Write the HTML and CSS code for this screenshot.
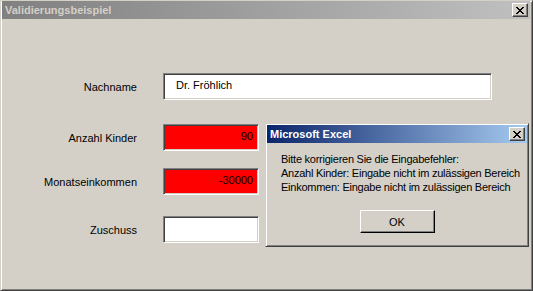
FILE: index.html
```html
<!DOCTYPE html>
<html>
<head>
  <title>Validierungsbeispiel</title>
  <link rel="stylesheet" href="styles.css">
</head>
<body>
  <div class="window">
    <div class="titlebar inactive">
      <span class="title">Validierungsbeispiel</span>
      <span class="close-btn">
        <svg width="8" height="7" viewBox="0 0 8 7"><path d="M0 0h2v1h-2zM6 0h2v1h-2zM1 1h2v1h-2zM5 1h2v1h-2zM2 2h4v1h-4zM3 3h2v1h-2zM2 4h4v1h-4zM1 5h2v1h-2zM5 5h2v1h-2zM0 6h2v1h-2zM6 6h2v1h-2z" fill="#000"/></svg>
      </span>
    </div>

    <div class="form">
      <div class="row row-name">
        <label class="label">Nachname</label>
        <div class="field field-wide">Dr. Fröhlich</div>
      </div>
      <div class="row row-kinder">
        <label class="label">Anzahl Kinder</label>
        <div class="field field-num error">90</div>
      </div>
      <div class="row row-income">
        <label class="label">Monatseinkommen</label>
        <div class="field field-num error">-30000</div>
      </div>
      <div class="row row-zuschuss">
        <label class="label">Zuschuss</label>
        <div class="field field-num"></div>
      </div>
    </div>

    <!-- message box over the form -->
    <div class="msgbox">
      <div class="titlebar active">
        <span class="title">Microsoft Excel</span>
        <span class="close-btn">
          <svg width="8" height="7" viewBox="0 0 8 7"><path d="M0 0h2v1h-2zM6 0h2v1h-2zM1 1h2v1h-2zM5 1h2v1h-2zM2 2h4v1h-4zM3 3h2v1h-2zM2 4h4v1h-4zM1 5h2v1h-2zM5 5h2v1h-2zM0 6h2v1h-2zM6 6h2v1h-2z" fill="#000"/></svg>
        </span>
      </div>
      <div class="msg-text">
        Bitte korrigieren Sie die Eingabefehler:<br>
        Anzahl Kinder: Eingabe nicht im zulässigen Bereich<br>
        Einkommen: Eingabe nicht im zulässigen Bereich
      </div>
      <div class="msg-buttons">
        <button class="ok-button">OK</button>
      </div>
    </div>
  </div>
</body>
</html>
```

FILE: styles.css
```css
body {
  margin: 0;
  background-color: #d4d0c8;
  font-family: "Liberation Sans", Arial, sans-serif;
  font-size: 11px;
  color: #000;
}
.window {
  position: relative;
  width: 533px;
  height: 291px;
  box-sizing: border-box;
  background-color: #d4d0c8;
  border-top: 1px solid #d4d0c8;
  border-left: 1px solid #d4d0c8;
  border-right: 1px solid #404040;
  border-bottom: 1px solid #404040;
  box-shadow: inset 1px 1px 0 #fff, inset -1px -1px 0 #808080;
  padding: 0 2px 2px 1px;
  overflow: hidden;
}
.titlebar {
  display: flex;
  align-items: center;
  justify-content: space-between;
  height: 18px;
  padding: 0 2px 0 3px;
}
.titlebar.inactive {
  background: linear-gradient(to right, #808080, #c0c0c0);
  color: #d4d0c8;
}
.titlebar.active {
  background: linear-gradient(to right, #0a246a, #a6caf0);
  color: #fff;
}
.title {
  font-weight: bold;
  font-size: 11px;
}
.close-btn {
  display: flex;
  align-items: center;
  justify-content: center;
  width: 16px;
  height: 14px;
  box-sizing: border-box;
  background-color: #d4d0c8;
  border-top: 1px solid #fff;
  border-left: 1px solid #fff;
  border-right: 1px solid #404040;
  border-bottom: 1px solid #404040;
  box-shadow: inset -1px -1px 0 #808080;
}
.form {
  padding-top: 54px;
}
.row {
  display: flex;
  align-items: center;
}
.row-kinder { margin-top: 24px; }
.row-income { margin-top: 17px; }
.row-zuschuss { margin-top: 21px; }
.label {
  width: 135px;
  text-align: right;
  margin-right: 26px;
}
.field {
  height: 27px;
  box-sizing: border-box;
  background-color: #fff;
  border-top: 1px solid #808080;
  border-left: 1px solid #808080;
  border-right: 1px solid #fff;
  border-bottom: 1px solid #fff;
  box-shadow: inset 1px 1px 0 #404040, inset -1px -1px 0 #d4d0c8;
  padding: 4px 5px 0 12px;
  line-height: 14px;
}
.field-wide {
  width: 329px;
}
.field-num {
  width: 96px;
  text-align: right;
}
.error {
  background-color: #ff0000;
}
.msgbox {
  position: absolute;
  left: 264px;
  top: 122px;
  width: 264px;
  height: 124px;
  box-sizing: border-box;
  background-color: #d4d0c8;
  border-top: 1px solid #d4d0c8;
  border-left: 1px solid #d4d0c8;
  border-right: 1px solid #404040;
  border-bottom: 1px solid #404040;
  box-shadow: inset 1px 1px 0 #fff, inset -1px -1px 0 #808080;
  padding: 1px;
}
.msg-text {
  padding: 9px 0 0 14px;
  line-height: 14px;
  white-space: nowrap;
  letter-spacing: -0.25px;
}
.msg-buttons {
  display: flex;
  justify-content: center;
  margin-top: 16px;
}
.ok-button {
  width: 75px;
  height: 23px;
  font-family: "Liberation Sans", Arial, sans-serif;
  font-size: 11px;
  background-color: #d4d0c8;
  border-top: 1px solid #fff;
  border-left: 1px solid #fff;
  border-right: 1px solid #000;
  border-bottom: 1px solid #000;
  box-shadow: inset -1px -1px 0 #808080;
  padding: 0;
}
```
